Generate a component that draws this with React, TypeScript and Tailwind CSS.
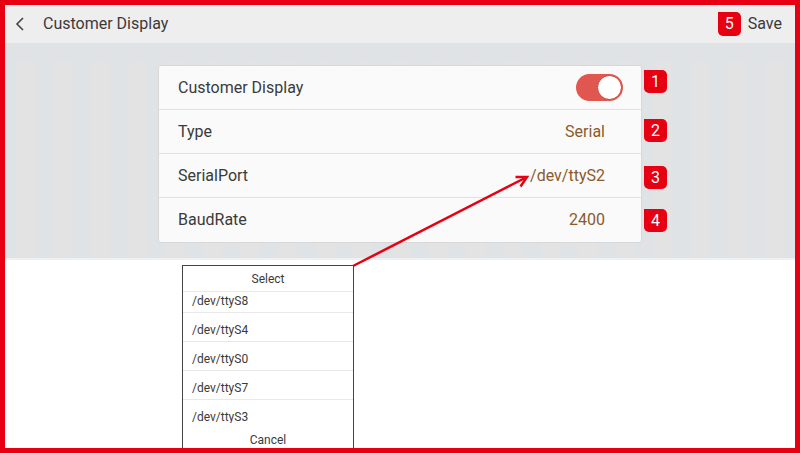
import React from "react";

const font = { fontFamily: "Roboto, 'Noto Sans', Arial, sans-serif" };

function Badge({ n, className }: { n: string; className?: string }) {
  return (
    <div
      className={
        "flex h-[23px] w-[23px] items-center justify-center rounded-[5px] rounded-tl-none bg-[#e60012] text-[16px] leading-none text-white " +
        (className ?? "")
      }
    >
      {n}
    </div>
  );
}

function Row({
  label,
  right,
  last,
}: {
  label: string;
  right: React.ReactNode;
  last?: boolean;
}) {
  return (
    <div
      className={
        "flex h-[44px] items-center justify-between pl-[19px] pr-[36px] " +
        (last ? "" : "border-b border-[#e2e2e2]")
      }
    >
      <span className="text-[16px] text-[#3a3a3a]">{label}</span>
      {right}
    </div>
  );
}

export default function App() {
  const items = ["/dev/ttyS8", "/dev/ttyS4", "/dev/ttyS0", "/dev/ttyS7", "/dev/ttyS3"];
  return (
    <div
      style={font}
      className="relative flex h-[453px] w-[800px] flex-col overflow-hidden border-[5px] border-[#e60012] bg-white"
    >
      {/* header */}
      <div className="flex h-[39px] shrink-0 items-center justify-between border-b border-[#e3e3e3] bg-[#eeeeee] pl-[10px] pr-[13px]">
        <div className="flex items-center">
          <svg width="12" height="14" viewBox="0 0 12 14" className="mr-[16px]">
            <path d="M8 1 L2 7 L8 13" fill="none" stroke="#444" strokeWidth="1.6" />
          </svg>
          <span className="text-[16px] text-[#3a3a3a]">Customer Display</span>
        </div>
        <div className="flex items-center gap-[7px]">
          <Badge n="5" className="h-[24px] w-[22px]" />
          <span className="text-[16px] text-[#3a3a3a]">Save</span>
        </div>
      </div>

      {/* gray area */}
      <div className="relative h-[216px] shrink-0 border-b-2 border-[#eef1f4] bg-[#dfe3e6] pt-[21px]">
        <div className="absolute inset-x-0 bottom-0 top-[18px] bg-[repeating-linear-gradient(90deg,transparent_0px,transparent_11px,#e3e3e3_11px,#e3e3e3_30px,transparent_30px,transparent_37.5px)]" />
        <div className="relative mx-auto w-[484px]">
          <div className="overflow-hidden rounded-[3px] border border-[#d8d8d8] bg-[#fafafa]">
            <Row
              label="Customer Display"
              right={
                <div className="relative -mr-[18px] h-[27px] w-[47px] rounded-full bg-[#e0574f]">
                  <div className="absolute right-[1px] top-[1px] h-[25px] w-[25px] rounded-full border border-[#c9443c] bg-white" />
                </div>
              }
            />
            <Row label="Type" right={<span className="text-[16px] text-[#8b5a2b]">Serial</span>} />
            <Row label="SerialPort" right={<span className="text-[16px] text-[#8b5a2b]">/dev/ttyS2</span>} />
            <Row label="BaudRate" right={<span className="text-[16px] text-[#8b5a2b]">2400</span>} last />
          </div>
          <Badge n="1" className="absolute left-[calc(100%+2px)] top-[5px]" />
          <Badge n="2" className="absolute left-[calc(100%+2px)] top-[54px]" />
          <Badge n="3" className="absolute left-[calc(100%+2px)] top-[101px]" />
          <Badge n="4" className="absolute left-[calc(100%+2px)] top-[144px]" />
        </div>
      </div>

      {/* white area with picker */}
      <div className="flex-1 pl-[177px] pt-[5px]">
        <div className="flex h-[192px] w-[172px] flex-col border-[1.5px] border-[#444444] bg-white text-[12px] text-[#3a3a3a]">
          <div className="flex h-[26px] shrink-0 items-center justify-center border-b border-[#e8e8e8] pt-[1px]">
            Select
          </div>
          <div className="h-[131px] shrink-0 overflow-hidden">
            <div className="-mt-[8px]">
              {items.map((it) => (
                <div
                  key={it}
                  className="flex h-[29px] items-center border-b border-[#e8e8e8] pl-[9px] pt-[6px]"
                >
                  {it}
                </div>
              ))}
            </div>
          </div>
          <div className="flex h-[34px] shrink-0 items-center justify-center">Cancel</div>
        </div>
      </div>

      {/* annotation arrow */}
      <svg
        width="800"
        height="453"
        className="pointer-events-none absolute -left-[5px] -top-[5px]"
      >
        <line x1="353" y1="266" x2="526" y2="177.5" stroke="#e60012" strokeWidth="2.5" />
        <polyline
          points="515.5,177 527,177 520.5,186.5"
          fill="none"
          stroke="#e60012"
          strokeWidth="2.5"
          strokeLinejoin="miter"
        />
      </svg>
    </div>
  );
}
